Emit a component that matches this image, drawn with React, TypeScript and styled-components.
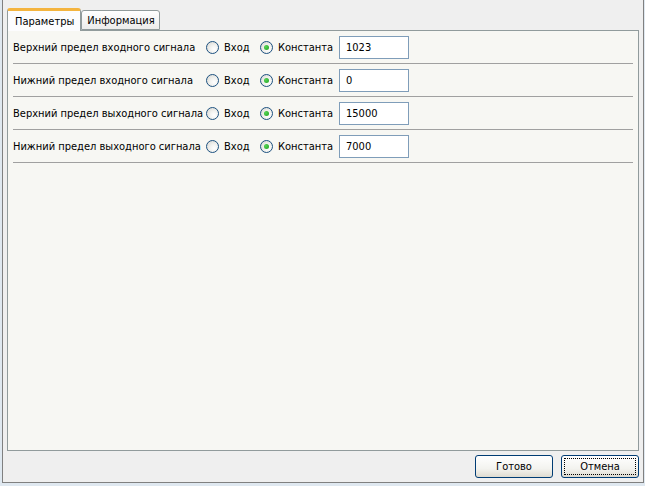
import React from 'react'
import styled, { createGlobalStyle } from 'styled-components'

const Global = createGlobalStyle`
  html, body { margin: 0; padding: 0; background: #dfe8f0; }
  body {
    font-family: "DejaVu Sans Condensed", "DejaVu Sans", sans-serif;
    font-stretch: condensed;
    font-size: 11px;
    color: #000;
  }
`

const Frame = styled.div`
  margin-left: 2px;
  width: 642px;
  height: 483px;
  background: #efefef;
  border: 1px solid #808080;
  border-top: none;
  padding: 8px 4px 0 4px;
  box-sizing: border-box;
  display: flex;
  flex-direction: column;
`

const TabStrip = styled.div`
  display: flex;
  align-items: flex-end;
  height: 22px;
  padding-left: 1px;
  position: relative;
  z-index: 1;
`

const Tab = styled.div<{ active?: boolean }>`
  box-sizing: border-box;
  height: ${p => (p.active ? '23px' : '20px')};
  padding: ${p => (p.active ? '4px 6px 0 7px' : '3px 4px 0 5px')};
  margin-left: ${p => (p.active ? '-1px' : '0')};
  background: ${p => (p.active ? '#fcfcfe' : 'linear-gradient(#ffffff, #ececeb)')};
  border: 1px solid #919b9c;
  border-bottom: ${p => (p.active ? 'none' : '1px solid #919b9c')};
  border-top: ${p => (p.active ? '3px solid #f4b43f' : '1px solid #919b9c')};
  border-radius: 3px 3px 0 0;
  margin-bottom: ${p => (p.active ? '-1px' : '0')};
  line-height: 13px;
  white-space: nowrap;
`

const Panel = styled.div`
  width: 632px;
  height: 421px;
  box-sizing: border-box;
  background: #f7f7f3;
  border: 1px solid #919b9c;
  padding: 0 5px 0 4px;
`

const Row = styled.div`
  height: 32px;
  border-bottom: 1px solid #a0a0a0;
  margin-left: 1px;
  display: flex;
  align-items: center;
`

const Label = styled.div`
  width: 193px;
  white-space: nowrap;
`

const RadioItem = styled.label<{ w: number }>`
  display: flex;
  align-items: center;
  gap: 5px;
  width: ${p => p.w}px;
`

const RadioCircle = styled.span<{ checked?: boolean }>`
  width: 13px;
  height: 13px;
  flex: none;
  box-sizing: border-box;
  border-radius: 50%;
  border: 1px solid #1c5180;
  background: radial-gradient(circle at 65% 65%, #ffffff 0%, #f2f2ef 40%, #d4d4ce 100%);
  display: flex;
  align-items: center;
  justify-content: center;
  &::after {
    content: '';
    display: ${p => (p.checked ? 'block' : 'none')};
    width: 5px;
    height: 5px;
    border-radius: 50%;
    background: radial-gradient(circle at 35% 35%, #55d455, #21a121);
  }
`

const Input = styled.div`
  width: 70px;
  height: 23px;
  box-sizing: border-box;
  border: 1px solid #7f9db9;
  background: #fff;
  padding: 0 6px;
  display: flex;
  align-items: center;
`

const Footer = styled.div`
  display: flex;
  justify-content: flex-end;
  gap: 8px;
  padding-top: 4px;
  width: 632px;
`

const Button = styled.div<{ focused?: boolean }>`
  width: 78px;
  height: 23px;
  box-sizing: border-box;
  border: 1px solid #003c74;
  border-radius: 3px;
  background: linear-gradient(#ffffff, #f3f3ef 60%, #dedbd0);
  display: flex;
  align-items: center;
  justify-content: center;
  position: relative;
  &::after {
    content: '';
    display: ${p => (p.focused ? 'block' : 'none')};
    position: absolute;
    inset: 2px;
    border: 1px dotted #000;
  }
`

const rows = [
  { label: 'Верхний предел входного сигнала', value: '1023' },
  { label: 'Нижний предел входного сигнала', value: '0' },
  { label: 'Верхний предел выходного сигнала', value: '15000' },
  { label: 'Нижний предел выходного сигнала', value: '7000' },
]

export default function App() {
  return (
    <>
      <Global />
      <Frame>
        <TabStrip>
          <Tab active>Параметры</Tab>
          <Tab>Информация</Tab>
        </TabStrip>
        <Panel>
          {rows.map(r => (
            <Row key={r.label}>
              <Label>{r.label}</Label>
              <RadioItem w={54}>
                <RadioCircle />
                Вход
              </RadioItem>
              <RadioItem w={79}>
                <RadioCircle checked />
                Константа
              </RadioItem>
              <Input>{r.value}</Input>
            </Row>
          ))}
        </Panel>
        <Footer>
          <Button>Готово</Button>
          <Button focused>Отмена</Button>
        </Footer>
      </Frame>
    </>
  )
}
